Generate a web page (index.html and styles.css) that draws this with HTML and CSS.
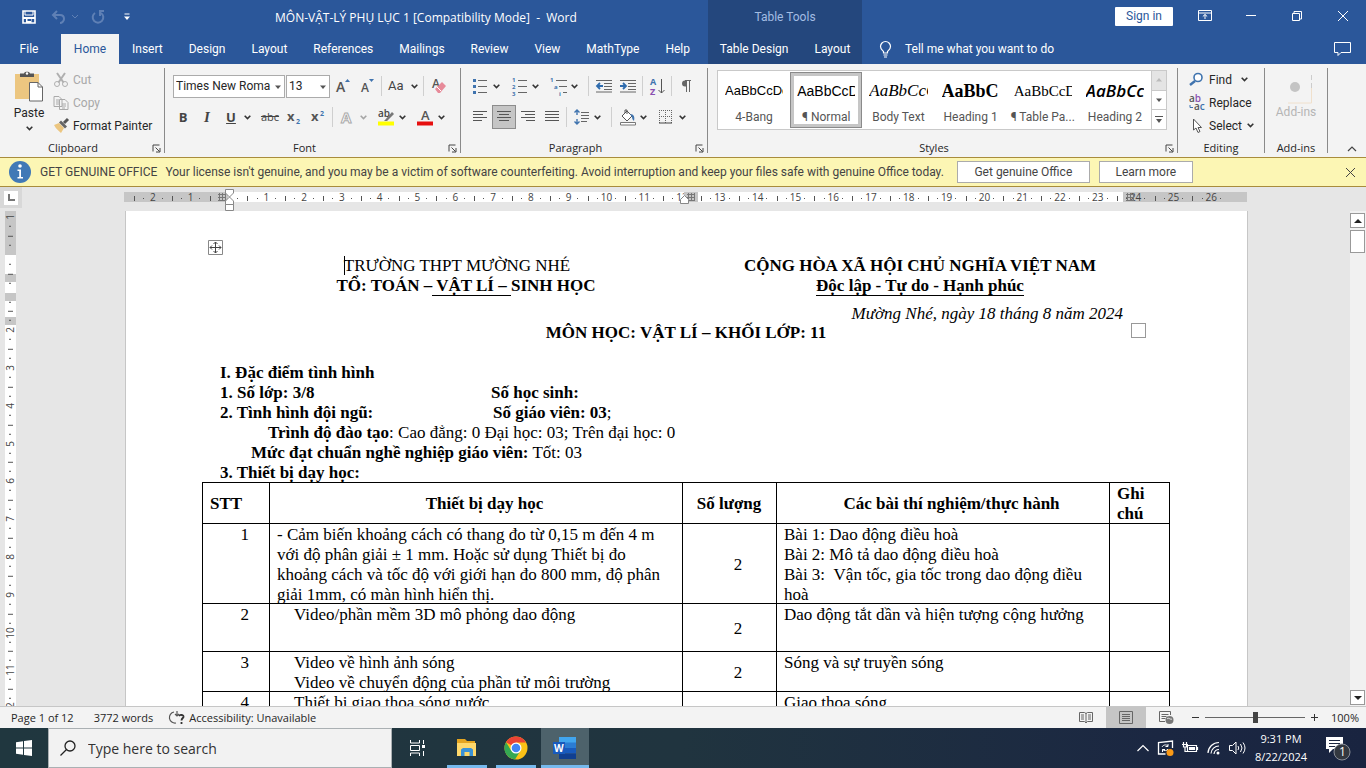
FILE: index.html
```html
<!DOCTYPE html>
<html lang="vi">
<head>
<meta charset="utf-8">
<title>MÔN-VẬT-LÝ PHỤ LỤC 1 - Word</title>
<link rel="stylesheet" href="styles.css">
</head>
<body>
<svg class="defs" aria-hidden="true">
  <symbol id="chev" viewBox="0 0 8 8"><path d="M1.500 2.500 4 5l2.500-2.500" fill="none" stroke="#333" stroke-width="1.400"/></symbol>
  <symbol id="tri" viewBox="0 0 8 8"><path d="M1 2.500h6L4 6z" fill="#555"/></symbol>
  <symbol id="launch" viewBox="0 0 9 9"><path d="M1 7.500V1h6.500M3.500 3.500l4 4M8 4v4H4" fill="none" stroke="#444"/></symbol>
</svg>

<header class="top">
  <div class="titlebar">
    <div class="quick">
      <button aria-label="Save"><svg width="14" height="14" viewBox="0 0 14 14"><path d="M1 1h12v12H1z" fill="none" stroke="#fff" stroke-width="1.600"/><path d="M1 7h12v2H1zM4 9h1.500v4H4zM5 11h5V9h-.5v4H5z" fill="#fff"/><path d="M3 1v4h8V1" fill="none" stroke="#fff"/></svg></button>
      <button class="undo" aria-label="Undo"><svg width="28" height="14" viewBox="0 0 28 14"><path d="M6 1 2 5l4 4M2 5h7c3 0 4 2 4 4s-2 4-4 4" fill="none" stroke="#5f80b5" stroke-width="2"/><path d="m21 5 3 3 3-3" fill="none" stroke="#5f80b5"/></svg></button>
      <button aria-label="Redo"><svg width="14" height="14" viewBox="0 0 14 14"><path d="M4 3a5.300 5.300 0 1 0 6 0M8 1h5M9 1v5" fill="none" stroke="#5f80b5" stroke-width="2"/></svg></button>
      <button class="custom" aria-label="Customize"><svg width="8" height="8" viewBox="0 0 8 8"><path d="M1.500 1h5" stroke="#fff"/><path d="M1 3.500h6L4 7z" fill="#fff"/></svg></button>
    </div>
    <h1 class="doc-title">MÔN-VẬT-LÝ PHỤ LỤC 1 [Compatibility Mode] &nbsp;- &nbsp;Word</h1>
  </div>
  <div class="context-title">Table Tools</div>
  <div class="window">
    <button class="signin">Sign in</button>
    <button class="wbtn" aria-label="Ribbon display options"><svg width="14" height="12" viewBox="0 0 14 12"><path d="M.5.5h13v10H.5zM.5 3h13M7 9V4.500M4.800 6.500 7 4.500l2.200 2" fill="none" stroke="#fff"/></svg></button>
    <button class="wbtn" aria-label="Minimize"><svg width="10" height="12" viewBox="0 0 10 12"><path d="M0 5.500h10" stroke="#fff"/></svg></button>
    <button class="wbtn" aria-label="Restore"><svg width="10" height="12" viewBox="0 0 10 12"><path d="M.5 3.500h7v7h-7zM2 3.500v-2h7.500V9H8" fill="none" stroke="#fff"/></svg></button>
    <button class="wbtn" aria-label="Close"><svg width="10" height="12" viewBox="0 0 10 12"><path d="m0 1 10 10M10 1 0 11" stroke="#fff" fill="none"/></svg></button>
  </div>
  <nav class="tabs">
    <button class="file">File</button><button class="active">Home</button><button>Insert</button><button>Design</button><button>Layout</button><button>References</button><button>Mailings</button><button>Review</button><button>View</button><button>MathType</button><button>Help</button>
  </nav>
  <nav class="tabs context"><button>Table Design</button><button>Layout</button></nav>
  <div class="tell">
    <svg width="13" height="17" viewBox="0 0 13 17"><path d="M4.500 12v-1.500C3 9 1.500 8 1.500 5.500a5 5 0 0 1 10 0C11.500 8 10 9 8.500 10.500V12zM4.500 14h4M5 16h3" fill="none" stroke="#fff" stroke-width="1.200"/></svg>
    <button class="tell-btn">Tell me what you want to do</button>
    <button class="comment" aria-label="Comments"><svg width="17" height="15" viewBox="0 0 17 15"><path d="M.5.5h16v10H7l-3 3v-3H.500z" fill="none" stroke="#fff"/></svg></button>
  </div>
</header>

<section class="ribbon">
  <div class="group g-clip">
    <div class="body">
      <button class="paste"><svg width="30" height="31" viewBox="0 0 30 31"><path d="M1 3h24v25H1z" fill="#ecc680"/><path d="M6 6V2.500h4C10 0 16 0 16 2.500h4V6z" fill="#555"/><circle cx="13" cy="2.500" r="1.200" fill="#fff"/><path d="M15.500 11.500H24l4.500 4.500v14h-13z" fill="#fff" stroke="#666"/><path d="M24 11.500V16h4.500" fill="none" stroke="#666"/></svg><span>Paste</span><svg width="9" height="9"><use href="#chev"/></svg></button>
      <div class="stack">
        <button class="off"><svg width="16" height="16" viewBox="0 0 16 16"><path d="M4 1l6.500 9.500M12 1 5.500 10.500" stroke="#b0b0b0" stroke-width="2"/><circle cx="4" cy="12" r="2.500" fill="none" stroke="#b0b0b0"/><circle cx="12" cy="12" r="2.500" fill="none" stroke="#b0b0b0"/></svg>Cut</button>
        <button class="off"><svg width="16" height="16" viewBox="0 0 16 16"><path d="M1 1.500h5l3 3v7H1zM6.500 4.500H12l3 3v7H6.500z" fill="#f3f3f3" stroke="#aaa"/><path d="M3 5h3M3 7h3M3 9h3M9 9h4M9 11h4M9 13h3" stroke="#aaa"/></svg>Copy</button>
        <button><svg width="16" height="16" viewBox="0 0 16 16"><path d="M1 7 6 5l5 5-3 5C6 13 3 11 1 7z" fill="#ecc680"/><path d="m6 4.500 2-2 6 6-2 2z" fill="#666"/><path d="m11 5 4-4" stroke="#555" stroke-width="3"/></svg>Format Painter</button>
      </div>
    </div>
    <div class="label">Clipboard<svg width="9" height="9"><use href="#launch"/></svg></div>
  </div>

  <div class="group g-font">
    <div class="body rows">
      <div class="row">
        <span class="combo name"><select aria-label="Font"><option>Times New Roma</option></select><svg width="8" height="8"><use href="#tri"/></svg></span>
        <span class="combo size"><select aria-label="Font size"><option>13</option></select><svg width="8" height="8"><use href="#tri"/></svg></span>
        <button class="ic" aria-label="Grow font"><svg width="16" height="16" viewBox="0 0 16 16"><text class="ga" x="1" y="14" font-size="14">A</text><path d="M10 4h5l-2.500-3z" fill="#3f73ae"/></svg></button>
        <button class="ic" aria-label="Shrink font"><svg width="16" height="16" viewBox="0 0 16 16"><text class="ga" x="2" y="14" font-size="12">A</text><path d="M10 1h5l-2.500 3z" fill="#3f73ae"/></svg></button>
        <i class="sep"></i>
        <button class="split aa">Aa<svg width="9" height="9"><use href="#chev"/></svg></button>
        <i class="sep wide"></i>
        <button class="ic" aria-label="Clear formatting"><svg width="16" height="16" viewBox="0 0 16 16"><text class="ga" x="1" y="10" font-size="12">A</text><path d="m4 11 7-7 4 4-6 7H7z" fill="#e78a99"/><path d="m6 9 4 4" stroke="#fff"/></svg></button>
      </div>
      <div class="row second">
        <button class="ic"><b>B</b></button><button class="ic"><em>I</em></button>
        <button class="split"><span class="ic"><u>U</u></span><svg width="9" height="9"><use href="#chev"/></svg></button>
        <button class="ic abc"><s>abc</s></button>
        <button class="ic" aria-label="Subscript"><svg width="16" height="16" viewBox="0 0 16 16"><text class="gx" x="1" y="12">x</text><text class="gn" x="10" y="15">2</text></svg></button>
        <button class="ic" aria-label="Superscript"><svg width="16" height="16" viewBox="0 0 16 16"><text class="gx" x="1" y="12">x</text><text class="gn" x="10" y="7">2</text></svg></button>
        <i class="sep"></i>
        <button class="split" aria-label="Text effects"><span class="ic"><svg width="16" height="16" viewBox="0 0 16 16"><text class="fx" x="2" y="14">A</text></svg></span><svg class="dim" width="9" height="9"><use href="#chev"/></svg></button>
        <button class="split" aria-label="Highlight"><span class="ic"><svg width="17" height="17" viewBox="0 0 17 17"><text class="hl" x="0" y="8">ab</text><path d="m7 11 7-8 2 2-7 7H6z" fill="#777"/><path d="M0 12.500h16v4H0z" fill="#ff0"/></svg></span><svg width="9" height="9"><use href="#chev"/></svg></button>
        <button class="split" aria-label="Font color"><span class="ic"><svg width="17" height="17" viewBox="0 0 17 17"><text class="ga" x="4" y="11" font-size="13">A</text><path d="M0 12.500h16v4H0z" fill="#e60f0f"/></svg></span><svg width="9" height="9"><use href="#chev"/></svg></button>
      </div>
    </div>
    <div class="label">Font<svg width="9" height="9"><use href="#launch"/></svg></div>
  </div>

  <div class="group g-para">
    <div class="body rows">
      <div class="row">
        <button class="split" aria-label="Bullets"><span class="ic"><svg width="15" height="16" viewBox="0 0 15 16"><path d="M5 2.500h9M5 8.500h9M5 14.500h9" stroke="#666"/><path d="M0 1h3v3H0zM0 7h3v3H0zM0 13h3v3H0z" fill="#3f73ae"/></svg></span><svg width="9" height="9"><use href="#chev"/></svg></button>
        <button class="split" aria-label="Numbering"><span class="ic"><svg width="15" height="17" viewBox="0 0 15 17"><path d="M6 2.500h9M6 8.500h9M6 14.500h9" stroke="#666"/><text class="li" x="0" y="4">1</text><text class="li" x="0" y="11">2</text><text class="li" x="0" y="18">3</text></svg></span><svg width="9" height="9"><use href="#chev"/></svg></button>
        <button class="split" aria-label="Multilevel list"><span class="ic"><svg width="17" height="17" viewBox="0 0 17 17"><path d="M6 2.500h11M9 8.500h8M13 14.500h4" stroke="#666"/><text class="li" x="0" y="4">1</text><text class="li" x="4" y="11">a</text><text class="li" x="9" y="18">i</text></svg></span><svg width="9" height="9"><use href="#chev"/></svg></button>
        <i class="sep wide"></i>
        <button class="ic" aria-label="Decrease indent"><svg width="16" height="14" viewBox="0 0 16 14"><path d="M0 1.500h16M8 4.500h8M8 7.500h8M8 10.500h8M0 13h16" stroke="#666"/><path d="M7 7H1m3-3L1 7l3 3" fill="none" stroke="#2f6cae" stroke-width="1.800"/></svg></button>
        <button class="ic" aria-label="Increase indent"><svg width="16" height="14" viewBox="0 0 16 14"><path d="M0 1.500h16M8 4.500h8M8 7.500h8M8 10.500h8M0 13h16" stroke="#666"/><path d="M0 7h6M3 4l3 3-3 3" fill="none" stroke="#2f6cae" stroke-width="1.800"/></svg></button>
        <i class="sep"></i>
        <button class="ic" aria-label="Sort"><svg width="15" height="17" viewBox="0 0 15 17"><text x="0" y="7" font-size="9" class="sa">A</text><text x="0" y="17" font-size="9" class="sz">Z</text><path d="M11.500 1v14M8.500 12l3 3 3-3" fill="none" stroke="#555"/></svg></button>
        <i class="sep"></i>
        <button class="ic" aria-label="Show marks"><svg width="12" height="14" viewBox="0 0 12 14"><path d="M11 1.500H5a3 3 0 0 0 0 6h1V2" fill="#666"/><path d="M6.500 1v12M9.500 1v12M5 1.500h6" stroke="#666"/></svg></button>
      </div>
      <div class="row second">
        <button class="ic" aria-label="Align left"><svg width="14" height="12" viewBox="0 0 14 12"><path d="M0 .5h14M0 3.500h10M0 6.500h14M0 9.500h9" stroke="#555"/></svg></button>
        <button class="ic on" aria-label="Center"><svg width="14" height="12" viewBox="0 0 14 12"><path d="M0 .5h14M2 3.500h10M0 6.500h14M2 9.500h10" stroke="#555"/></svg></button>
        <button class="ic" aria-label="Align right"><svg width="14" height="12" viewBox="0 0 14 12"><path d="M0 .5h14M4 3.500h10M0 6.500h14M5 9.500h9" stroke="#555"/></svg></button>
        <button class="ic" aria-label="Justify"><svg width="14" height="12" viewBox="0 0 14 12"><path d="M0 .5h14M0 3.500h14M0 6.500h14M0 9.500h14" stroke="#555"/></svg></button>
        <i class="sep"></i>
        <button class="split" aria-label="Line spacing"><span class="ic"><svg width="15" height="16" viewBox="0 0 15 16"><path d="M7 3.500h8M7 6.500h8M7 9.500h8M7 12.500h6" stroke="#666"/><path d="M3 1v5M3 10v5M.5 3.500 3 1l2.500 2.500M.5 12.500 3 15l2.500-2.500" fill="none" stroke="#3f73ae" stroke-width="1.400"/></svg></span><svg width="9" height="9"><use href="#chev"/></svg></button>
        <i class="sep wide"></i>
        <button class="split" aria-label="Shading"><span class="ic"><svg width="17" height="17" viewBox="0 0 17 17"><path d="m3 7 5-5 5 5-5 5zM6 4V1h2v4" fill="#fff" stroke="#555"/><path d="M11 5c4 0 5 3 4 7-1-1-2-2-2-4z" fill="#3f73ae"/><path d="M1.500 13.500h15v2.500h-15z" fill="#fff" stroke="#777"/></svg></span><svg width="9" height="9"><use href="#chev"/></svg></button>
        <button class="split" aria-label="Borders"><span class="ic"><svg width="14" height="14" viewBox="0 0 14 14"><path d="M.5 0v13M6.500 0v13M12.500 0v13M0 .5h13M0 6.500h13" stroke="#666" stroke-dasharray="1 1"/><path d="M0 13h13" stroke="#444"/></svg></span><svg width="9" height="9"><use href="#chev"/></svg></button>
      </div>
    </div>
    <div class="label">Paragraph<svg width="9" height="9"><use href="#launch"/></svg></div>
  </div>

  <div class="group g-styles">
    <div class="gallery">
      <button><span class="pv sans">AaBbCcDc</span><span>4-Bang</span></button>
      <button class="sel"><span class="pv sans big">AaBbCcD</span><span>¶ Normal</span></button>
      <button><span class="pv it">AaBbCcC</span><span>Body Text</span></button>
      <button><span class="pv bd">AaBbC</span><span>Heading 1</span></button>
      <button><span class="pv">AaBbCcD</span><span>¶ Table Pa...</span></button>
      <button><span class="pv h2">AaBbCc</span><span>Heading 2</span></button>
      <div class="gscroll">
        <button class="offbg" aria-label="Up"><svg width="8" height="8" viewBox="0 0 8 8"><path d="M1 5.500h6L4 2z" fill="#bbb"/></svg></button>
        <button aria-label="Down"><svg width="8" height="8"><use href="#tri"/></svg></button>
        <button aria-label="More"><svg width="8" height="8" viewBox="0 0 8 8"><path d="M0 .5h8" stroke="#555"/><path d="M1 3h6L4 7z" fill="#555"/></svg></button>
      </div>
    </div>
    <div class="label">Styles<svg width="9" height="9"><use href="#launch"/></svg></div>
  </div>

  <div class="group g-edit">
    <div class="stack">
      <button><svg width="16" height="16" viewBox="0 0 16 16"><circle cx="9" cy="5.500" r="4" fill="#fff" stroke="#3f73ae" stroke-width="1.600"/><path d="m6 9-5 4" stroke="#3f73ae" stroke-width="2.500"/></svg>Find<svg class="far" width="9" height="9"><use href="#chev"/></svg></button>
      <button><svg width="16" height="16" viewBox="0 0 16 16"><text class="rp" x="0" y="7">a<tspan fill="#8a4fb0">b</tspan></text><text class="rp" x="5" y="15">a<tspan fill="#3f73ae">c</tspan></text><path d="M1 10v2.500h3" fill="none" stroke="#3f73ae"/></svg>Replace</button>
      <button><svg width="16" height="16" viewBox="0 0 16 16"><path d="M4.500 1v11l2.500-2 2 4.500 2-1L9 9.500h3.500z" fill="#fff" stroke="#555"/></svg>Select<svg width="9" height="9"><use href="#chev"/></svg></button>
    </div>
    <div class="label">Editing</div>
  </div>

  <div class="group g-add">
    <button class="addins"><svg width="36" height="32" viewBox="0 0 36 32"><circle cx="17" cy="15" r="5" fill="#c4c4c4"/><path d="M33.500 3v13" stroke="#ccc" stroke-dasharray="5 3"/><path d="M33.500 16v15H10" fill="none" stroke="#f0e0cc"/></svg><span>Add-ins</span></button>
    <div class="label">Add-ins</div>
  </div>
  <button class="collapse" aria-label="Collapse ribbon"><svg width="10" height="6" viewBox="0 0 10 6"><path d="m1 5 4-4 4 4" fill="none" stroke="#444" stroke-width="1.200"/></svg></button>
</section>

<section class="notice">
  <svg width="22" height="22" viewBox="0 0 22 22"><circle cx="11" cy="11" r="11" fill="#4179b6"/><circle cx="11" cy="5" r="1.800" fill="#fff"/><path d="M8.500 8.500H12V16h2v1.500H8.500V16h1.700v-6H8.500z" fill="#fff"/></svg>
  <strong>GET GENUINE OFFICE</strong>
  <span class="msg">Your license isn't genuine, and you may be a victim of software counterfeiting. Avoid interruption and keep your files safe with genuine Office today.</span>
  <button class="get">Get genuine Office</button><button class="learn">Learn more</button>
  <button class="x" aria-label="Close message"><svg width="9" height="9" viewBox="0 0 9 9"><path d="m0 0 9 9M9 0 0 9" stroke="#444"/></svg></button>
</section>

<main class="work">
  <div class="corner"><button aria-label="Tab selector"><svg width="7" height="7" viewBox="0 0 7 7"><path d="M1 0v6h6" fill="none" stroke="#777" stroke-width="2"/></svg></button></div>
  <div class="hband">
    <div class="hruler">
      <span>2</span><span>1</span><span></span><span>1</span><span>2</span><span>3</span><span>4</span><span>5</span><span>6</span><span>7</span><span>8</span><span>9</span><span>10</span><span>11</span><span>12</span><span>13</span><span>14</span><span>15</span><span>16</span><span>17</span><span>18</span><span>19</span><span>20</span><span>21</span><span>22</span><span>23</span><span>24</span><span>25</span><span>26</span>
      <svg class="grip a" width="8" height="8" viewBox="0 0 8 8"><path d="M1.500 0v8M4.500 0v8M7.500 0v8M0 1.500h8M0 4.500h8M0 7.500h8" stroke="#777"/></svg>
      <svg class="grip b" width="14" height="10" viewBox="0 0 14 10"><path d="M0 0h14v10H0z" fill="#c6c6c6"/><path d="M4.500 1v8M7.500 1v8M10.500 1v8M3 2.500h8M3 5.500h8M3 8.500h8" stroke="#777"/></svg>
      <svg class="grip c" width="8" height="8" viewBox="0 0 8 8"><path d="M1.500 0v8M4.500 0v8M7.500 0v8M0 1.500h8M0 4.500h8M0 7.500h8" stroke="#777"/></svg>
      <svg class="mark m1" width="9" height="22" viewBox="0 0 9 22"><path d="M.5.5h8V4L4.500 8 .5 4zM.5 15.500V12l4-4 4 4v3.500zM.5 15.500h8v6h-8z" fill="#fff" stroke="#888"/></svg>
      <svg class="mark m2" width="9" height="9" viewBox="0 0 9 9"><path d="M.5 8.500V4.500l4-4 4 4v4z" fill="#fff" stroke="#888"/></svg>
    </div>
  </div>
  <div class="vruler"><div class="vcells"><span>1</span><span></span><span></span><span>2</span><span>3</span><span>4</span><span>5</span><span>6</span><span>7</span><span>8</span><span>9</span><span>10</span><span>11</span><span>12</span></div></div>
  <div class="canvas">
    <article class="page">
      <svg class="handle" width="15" height="15" viewBox="0 0 15 15"><path d="M.5.5h14v14H.5z" fill="#fff" stroke="#888"/><path d="M7.500 2v11M2 7.500h11M5.500 4l2-2 2 2M5.500 11l2 2 2-2M4 5.500l-2 2 2 2M11 5.500l2 2-2 2" fill="none" stroke="#444"/></svg>
      <div class="heads">
        <div class="left"><p class="caret">TRƯỜNG THPT MƯỜNG NHÉ</p><p class="unit"><b>TỔ: TOÁN –<span class="ul"> VẬT LÍ – </span>SINH HỌC</b></p></div>
        <div class="right"><p><b>CỘNG HÒA XÃ HỘI CHỦ NGHĨA VIỆT NAM</b></p><p><b class="ul">Độc lập - Tự do - Hạnh phúc</b></p><p class="date">Mường Nhé, ngày 18 tháng 8 năm 2024</p></div>
        <i class="endbox"></i>
      </div>
      <h2 class="subject">MÔN HỌC: VẬT LÍ – KHỐI LỚP: 11</h2>
      <div class="intro">
        <p><b>I. Đặc điểm tình hình</b></p>
        <p class="pair"><b>1. Số lớp: 3/8</b><b>Số học sinh:</b></p>
        <p class="pair two"><b>2. Tình hình đội ngũ:</b><span><b>Số giáo viên: 03</b>;</span></p>
        <p class="in2"><b>Trình độ đào tạo</b>: Cao đẳng: 0 Đại học: 03; Trên đại học: 0</p>
        <p class="in1"><b>Mức đạt chuẩn nghề nghiệp giáo viên:</b> Tốt: 03</p>
        <p><b>3. Thiết bị dạy học:</b></p>
      </div>
      <table class="grid">
        <colgroup><col class="c1"><col><col class="c3"><col class="c4"><col class="c5"></colgroup>
        <thead><tr><th class="l">STT</th><th class="wide-h">Thiết bị dạy học</th><th>Số lượng</th><th class="wide-h">Các bài thí nghiệm/thực hành</th><th class="l"><p>Ghi<br>chú</p></th></tr></thead>
        <tbody>
          <tr><td class="n"><p>1</p></td><td><p>- Cảm biến khoảng cách có thang đo từ 0,15 m đến 4 m<br>với độ phân giải ± 1 mm. Hoặc sử dụng Thiết bị đo<br>khoảng cách và tốc độ với giới hạn đo 800 mm, độ phân<br>giải 1mm, có màn hình hiển thị.</p></td><td class="q"><p>2</p></td><td><p>Bài 1: Dao động điều hoà<br>Bài 2: Mô tả dao động điều hoà<br>Bài 3: &nbsp;Vận tốc, gia tốc trong dao động điều<br>hoà</p></td><td></td></tr>
          <tr class="r2"><td class="n"><p>2</p></td><td class="ind"><p>Video/phần mềm 3D mô phỏng dao động</p></td><td class="q"><p>2</p></td><td><p>Dao động tắt dần và hiện tượng cộng hưởng</p></td><td></td></tr>
          <tr><td class="n"><p>3</p></td><td class="ind"><p>Video về hình ảnh sóng<br>Video về chuyển động của phần tử môi trường</p></td><td class="q"><p>2</p></td><td><p>Sóng và sự truyền sóng</p></td><td></td></tr>
          <tr><td class="n"><p>4</p></td><td class="ind"><p>Thiết bị giao thoa sóng nước</p></td><td></td><td><p>Giao thoa sóng</p></td><td></td></tr>
        </tbody>
      </table>
    </article>
  </div>
  <div class="vscroll">
    <button aria-label="Scroll up"><svg width="8" height="8" viewBox="0 0 8 8"><path d="M0 6h8L4 2z" fill="#222"/></svg></button>
    <i class="thumb"></i>
    <button class="down" aria-label="Scroll down"><svg width="8" height="8" viewBox="0 0 8 8"><path d="M0 2h8L4 6z" fill="#222"/></svg></button>
  </div>
</main>

<footer class="status">
  <span class="pg">Page 1 of 12</span><span class="wc">3772 words</span>
  <span class="acc"><svg width="16" height="15" viewBox="0 0 16 15"><path d="M4 2a5.500 5.500 0 0 0 2 11M7 1v5M5 4l2 2 2-2" fill="none" stroke="#555" stroke-width="1.200"/><path d="M9 6c1-2 5-1 4.500 1-.3 1-2 1.500-2 3.500m0 1.500v2" fill="none" stroke="#333" stroke-width="1.800"/></svg>Accessibility: Unavailable</span>
  <div class="views">
    <button aria-label="Read mode"><svg width="14" height="13" viewBox="0 0 14 13"><path d="M.5 1.500h5L7 2.500l1.500-1h5v9h-5L7 12l-1.500-1.500h-5zM7 2v10M2 4h3M2 6h3M2 8h3M9 4h3M9 6h3M9 8h3" fill="none" stroke="#666"/></svg></button>
    <button class="on" aria-label="Print layout"><svg width="14" height="13" viewBox="0 0 14 13"><path d="M.5.5h13v12H.5zM3 3.500h8M3 5.500h8M3 7.500h8M3 9.500h8" fill="none" stroke="#666"/></svg></button>
    <button aria-label="Web layout"><svg width="15" height="13" viewBox="0 0 15 13"><path d="M6 10.500H.5V.5h11V4M2.500 3.500h7M2.500 5.500h5M2.500 7.500h4" fill="none" stroke="#666"/><circle cx="10.500" cy="9" r="4" fill="#777"/><path d="M8 8c2-2 3 1 5 0" stroke="#eee" fill="none"/></svg></button>
  </div>
  <button class="pm" aria-label="Zoom out"><svg width="9" height="9" viewBox="0 0 9 9"><path d="M1 4.500h7" stroke="#333"/></svg></button>
  <input class="zoom" type="range" min="0" max="100" value="50" aria-label="Zoom">
  <button class="pm" aria-label="Zoom in"><svg width="9" height="9" viewBox="0 0 9 9"><path d="M1 4.500h7M4.500 1v7" stroke="#333"/></svg></button>
  <span class="pct">100%</span>
</footer>

<footer class="taskbar">
  <button class="start" aria-label="Start"><svg width="16" height="16" viewBox="0 0 16 16"><path d="M0 2.200 7 1.200V7.500H0zM8 1 16 0v7.500H8zM0 8.500h7v6.300L0 13.800zM8 8.500h8V16L8 15z" fill="#fff"/></svg></button>
  <label class="search"><svg width="17" height="17" viewBox="0 0 17 17"><circle cx="10" cy="6" r="5" fill="none" stroke="#222" stroke-width="1.300"/><path d="M6.500 9.500.5 15.500" stroke="#222" stroke-width="1.300"/></svg><input type="text" placeholder="Type here to search" aria-label="Search"></label>
  <button class="app tv" aria-label="Task view"><svg width="16" height="16" viewBox="0 0 16 16"><path d="M1.500 0v3h9V0M1.500 5.500h9v5h-9zM1.500 16v-3h9v3M14.500 0v4M14.500 11v5" fill="none" stroke="#fff"/><path d="M13 5h3v3h-3z" fill="#fff"/></svg></button>
  <button class="app open ex" aria-label="File Explorer"><svg width="20" height="20" viewBox="0 0 20 20"><path d="M0 1h8l2 2h8v15H0z" fill="#e5a520"/><path d="M0 5h19v13H0z" fill="#ffd86b"/><path d="M4 18v-6.500L6 10h8l2 1.500V18h-3.500v-4h-5v4z" fill="#3b92d6"/></svg></button>
  <button class="app open ch" aria-label="Chrome"><svg width="24" height="24" viewBox="0 0 24 24"><circle cx="12" cy="12" r="11.500" fill="#fbc116"/><path d="M12 12 2 6.200A11.500 11.500 0 0 1 22 6.500H12z" fill="#ea4335"/><path d="M2 6.200A11.500 11.500 0 0 0 11 23.500L16.500 14.500 7.200 14.500z" fill="#34a853"/><circle cx="12" cy="12" r="5.500" fill="#fff"/><circle cx="12" cy="12" r="4.300" fill="#4285f4"/></svg></button>
  <button class="app open wd" aria-label="Word"><svg width="24" height="22" viewBox="0 0 24 22"><path d="M6 0h17v6H6z" fill="#41a5ee"/><path d="M6 5.500h17V11H6z" fill="#2b7cd3"/><path d="M6 11h17v5.500H6z" fill="#185abd"/><path d="M6 16.500h17V22H6z" fill="#103f91"/><path d="M0 5h12v12H0z" fill="#185abd"/><text x="1" y="15" class="wl">W</text></svg></button>
  <div class="tray">
    <svg width="12" height="12" viewBox="0 0 12 12"><path d="m.5 9 5.500-5.500L11.500 9" fill="none" stroke="#fff" stroke-width="1.200"/></svg>
    <svg width="17" height="16" viewBox="0 0 17 16"><path d="M15.500 8V1L1.500 2.500V14h7" fill="none" stroke="#fff" stroke-width="1.300"/><path d="M5 7c1-2 4-3 6-1m0-2v2.500H8.500M11 9c-1 2-4 2-5.500.500M5.500 12V9.500H8" fill="none" stroke="#fff"/><circle cx="13" cy="12.500" r="3.500" fill="#fb9a17"/></svg>
    <svg width="17" height="12" viewBox="0 0 17 12"><path d="M5.500 3.500h9v6h-9zM15.500 5v3M0 2.500h6M1.500 0v5h3V0M3 5v4.500h2" fill="none" stroke="#fff" stroke-width="1.200"/><path d="M7 5h6v3H7z" fill="#fff"/></svg>
    <svg width="14" height="14" viewBox="0 0 14 14"><path d="M1 12A11 11 0 0 1 12 1.500M4 12.500A8 8 0 0 1 12 5M7 13a5 5 0 0 1 5-4.500" fill="none" stroke="#fff" stroke-width="1.200"/><circle cx="11" cy="12" r="1.500" fill="#fff"/></svg>
    <svg width="17" height="14" viewBox="0 0 17 14"><path d="M.5 4.500h3l3.500-3.500v12L3.500 9.500h-3zM9 5q1.500 2 0 4M11.500 3q3 4 0 8M14 1.500q4 5.500 0 11" fill="none" stroke="#fff"/></svg>
  </div>
  <div class="clock"><span>9:31 PM</span><span>8/22/2024</span></div>
  <button class="bell" aria-label="Notifications"><svg width="26" height="26" viewBox="0 0 26 26"><path d="M1 2h17v12H8l-4 4v-4H1z" fill="#fff"/><path d="M4 5.500h11M4 8.500h11M4 11.500h6" stroke="#1c2740"/><circle cx="17" cy="17" r="8" fill="#333840" stroke="#8a8f98"/><text x="14" y="21" class="bn">1</text></svg></button>
</footer>
</body>
</html>
```
FILE: styles.css
```css
* { box-sizing: border-box; }
body { margin: 0; height: 100vh; display: flex; flex-direction: column; overflow: hidden; font: 12px/16px Roboto, "Open Sans", sans-serif; color: #262626; background: #e6e6e6; }
button { font: inherit; color: inherit; background: none; border: 0; padding: 0; margin: 0; display: inline-flex; align-items: center; justify-content: center; white-space: nowrap; flex: none; }
svg { display: block; flex: none; overflow: visible; }
p, h1, h2 { margin: 0; font-weight: normal; }
.defs { position: absolute; width: 0; height: 0; }

/* title bar and tabs */
.top { display: grid; grid-template-columns: 708px 154px 1fr; grid-template-rows: 34px 30px; background: #2b579a; color: #fff; flex: none; }
.titlebar { display: flex; align-items: center; }
.quick { display: flex; align-items: center; padding-left: 22px; width: 275px; }
.undo { margin-left: 15px; }
.quick .undo + button { margin-left: 12px; }
.quick .custom { margin-left: 18px; }
.doc-title { font: 12px/16px "Open Sans", sans-serif; white-space: nowrap; padding-top: 1px; }
.context-title { background: #24477d; color: #a3bde3; display: flex; align-items: center; justify-content: center; }
.window { display: flex; align-items: center; justify-content: flex-end; padding-bottom: 2px; }
.signin { background: #fff; color: #2b579a; width: 58px; height: 19px; margin-right: 9px; border-radius: 1px; }
.wbtn { width: 46px; height: 30px; }
.tabs { display: flex; }
.tabs button { padding: 0 13px; height: 30px; }
.tabs .file { width: 58px; margin-right: 3px; }
.tabs .active { background: #f3f3f3; color: #2b579a; width: 58px; padding: 0; }
.tabs.context { background: #24477d; justify-content: center; }
.tell { display: flex; align-items: center; padding: 0 15px 0 17px; }
.tell-btn { margin-left: 13px; }
.comment { margin-left: auto; }

/* ribbon */
.ribbon { display: flex; height: 93px; background: #f3f3f3; flex: none; padding-top: 4px; }
.group { position: relative; height: 85px; flex: none; border-right: 1px solid #8a8a8a; display: flex; flex-direction: column; }
.label { margin-top: auto; text-align: center; height: 10px; line-height: 10px; font-size: 11px; font-family: "Open Sans", sans-serif; position: relative; }
.label svg { position: absolute; right: 3px; top: 1px; }
.body { display: flex; }
.g-clip { width: 165px; }
.g-clip .label { padding-right: 18px; }
.g-font { width: 296px; padding-left: 6px; }
.g-font .label { padding-right: 22px; }
.g-para { width: 247px; padding-left: 7px; }
.g-para .label { padding-right: 24px; }
.group.g-styles { flex: 1 1 0; min-width: 0; padding: 2px 10px 0 9px; }
.g-styles .label { padding-right: 16px; }
.g-styles .label svg { right: -7px; }
.g-edit { width: 87px; padding-left: 11px; }
.g-edit .label { padding-right: 11px; }
.g-add { width: 63px; }
.paste { flex-direction: column; justify-content: flex-start; width: 50px; padding: 3px 0 0 8px; gap: 3px; }
.stack { display: flex; flex-direction: column; align-items: flex-start; }
.g-clip .stack { padding-left: 3px; }
.stack button { height: 23px; gap: 4px; }
.stack .far { margin-left: 4px; }
.off { color: #a8a8a8; }
.rows { flex-direction: column; }
.row { display: flex; align-items: center; height: 24px; margin-top: 6px; color: #444; }
.row.second { margin-top: 7px; }
.ic { width: 24px; height: 24px; display: inline-flex; align-items: center; justify-content: center; font-family: "Open Sans", sans-serif; }
.ic b, .ic em, .ic u { font-size: 13px; font-weight: 700; }
.ic em { font-family: "Liberation Serif", serif; font-size: 15px; }
.abc { font-size: 11px; }
.split { width: 36px; height: 24px; justify-content: flex-start; margin-right: 3px; }
.dim { opacity: .4; }
.aa { font-size: 13px; gap: 6px; padding-left: 4px; margin: 0; }
.on { background: #c5c5c5; box-shadow: inset 0 0 0 1px #8c8c8c; }
.sep { width: 1px; height: 20px; background: #cfcfcf; margin: 0 2px 0 2px; flex: none; }
.sep.wide { margin: 0 3px 0 3px; }
.combo { position: relative; height: 23px; flex: none; }
.combo select { appearance: none; width: 100%; height: 23px; border: 1px solid #ababab; border-radius: 0; background: #fff; font: inherit; color: #262626; padding: 0 0 0 2px; }
.combo svg { position: absolute; right: 3px; top: 8px; }
.name { width: 112px; margin: 0 1px 0 2px; }
.g-font .row .size { width: 44px; margin-right: 1px; }
.ga { font-family: "Open Sans", sans-serif; font-weight: 600; fill: #555; }
.gx { font: 700 13px "Open Sans", sans-serif; fill: #555; }
.gn { font: 700 7px "Open Sans", sans-serif; fill: #3f73ae; }
.fx { font: 700 15px "Open Sans", sans-serif; fill: #fff; stroke: #aaa; }
.hl { font: 600 10px "Open Sans", sans-serif; fill: #444; }
.li { font: 700 6px "Open Sans", sans-serif; fill: #3f73ae; }
.sa { font-family: "Open Sans", sans-serif; font-weight: 700; fill: #3f73ae; }
.sz { font-family: "Open Sans", sans-serif; font-weight: 700; fill: #8a4fb0; }
.rp { font: 600 10px "Open Sans", sans-serif; fill: #555; }
.gallery { display: flex; height: 60px; background: #fff; border: 1px solid #c9c9c9; }
.gallery > button { flex: 1; min-width: 0; flex-direction: column; color: #555; padding: 5px 7px 0; gap: 3px; justify-content: flex-start; overflow: hidden; }
.gallery > .sel { box-shadow: inset 0 0 0 1px #8a8a8a, inset 0 0 0 4px #c6c6c6; margin: 1px 0; padding-top: 4px; }
.pv { width: 100%; height: 30px; line-height: 30px; overflow: hidden; color: #000; font-family: "Liberation Serif", serif; font-size: 15px; text-align: left; }
.pv.sans { font-family: "Liberation Sans", sans-serif; font-size: 13px; }
.pv.big { font-size: 14px; }
.pv.it { font-style: italic; font-size: 17px; }
.pv.bd { font-weight: 700; font-size: 18px; }
.pv.h2 { font: italic 600 17px/30px "Open Sans", sans-serif; }
.gscroll { width: 15px; display: flex; flex-direction: column; border-left: 1px solid #c9c9c9; flex: none; }
.gscroll button { flex: 1; border-bottom: 1px solid #c9c9c9; }
.gscroll button:last-child { border-bottom: 0; }
.offbg { background: #e4e4e4; }
.addins { flex-direction: column; color: #b5b5b5; padding-top: 4px; }
.collapse { width: 38px; align-self: flex-end; justify-content: flex-end; padding: 0 9px 5px 0; }

/* license notice */
.notice { display: flex; align-items: center; height: 30px; flex: none; background: #fcf6b4; border: solid #a88c3c; border-width: 1px 0; padding: 0 11px 0 9px; white-space: nowrap; color: #444; }
.notice strong { font-weight: 400; margin: 0 8px 0 9px; }
.notice button { height: 22px; background: #fff; border: 1px solid #ababab; }
.notice .get { margin-left: 13px; width: 133px; }
.notice .learn { margin-left: 9px; width: 94px; }
.notice .x { margin-left: auto; background: none; border: 0; }

/* document workspace */
.work { flex: 1; min-height: 0; display: grid; grid-template-columns: 22px 1fr 16px; grid-template-rows: 24px 1fr; background: #e6e6e6; }
.corner { background: #d8d8d8; display: flex; align-items: center; padding: 0 0 0 4px; height: 21px; }
.corner button { width: 14px; height: 14px; background: #fff; }
.hband { grid-column: 2 / 4; padding: 5px 119px 0 102px; }
.hruler { position: relative; display: flex; height: 10px; padding: 0 17px 0 10px; background: linear-gradient(90deg, #c6c6c6 104px, #fff 104px, #fff calc(100% - 124px), #c6c6c6 calc(100% - 124px)); font: 10px/11px "Open Sans", sans-serif; color: #444; }
.hruler span { flex: 1; text-align: center; background: linear-gradient(#555, #555) 0 4px / 1px 5px no-repeat, linear-gradient(#555, #555) 25% 6px / 1px 1px no-repeat, linear-gradient(#555, #555) 75% 6px / 1px 1px no-repeat; }
.grip { position: absolute; top: 1px; }
.grip.a { left: 94px; }
.grip.b { left: 560px; top: 0; }
.grip.c { right: 113px; }
.mark { position: absolute; }
.m1 { left: 101px; top: -3px; }
.m2 { left: 556px; top: 3px; }
.vruler { width: 11px; margin-left: 5px; overflow: hidden; background: linear-gradient(#c6c6c6 44px, #fff 44px, #fff 63px, #c6c6c6 63px, #c6c6c6 71px, #fff 71px, #fff 82px, #c6c6c6 82px, #c6c6c6 90px, #fff 90px, #fff 106px, #c6c6c6 106px, #c6c6c6 114px, #fff 114px); }
.vcells { display: flex; flex-direction: column; height: 529px; margin-top: -13px; font: 10px/11px "Open Sans", sans-serif; color: #444; }
.vcells span { flex: 1; display: flex; justify-content: center; writing-mode: vertical-rl; transform: rotate(180deg); text-align: center; background: linear-gradient(#555, #555) 3px 100% / 5px 1px no-repeat, linear-gradient(#555, #555) 5px 25% / 2px 1px no-repeat, linear-gradient(#555, #555) 5px 75% / 2px 1px no-repeat; }
.canvas { overflow: hidden; padding: 0 102px 0 103px; }
.page { position: relative; background: #fff; border: solid #c6c6c6; border-width: 0 1px; min-height: 100%; padding: 45px 77px 0 76px; font: 17px/20px "Liberation Serif", serif; color: #000; }
.handle { position: absolute; left: 82px; top: 29px; }
.heads { position: relative; display: grid; grid-template-columns: 1fr 1fr; height: 67px; text-align: center; white-space: nowrap; }
.heads .left { padding-left: 26px; }
.unit { padding-left: 18px; }
.right { padding-right: 16px; }
.ul { border-bottom: 1px solid #000; white-space: pre; }
.heads .date { font-style: italic; text-align: right; padding: 8px 31px 0 0; }
.caret::before { content: ""; display: inline-block; height: 19px; width: 1px; margin-right: -1px; background: #000; vertical-align: -4px; }
.endbox { position: absolute; right: 24px; bottom: -15px; width: 15px; height: 15px; border: 1px solid #999; background: #fff; }
.subject { font-size: 17px; font-weight: 700; text-align: center; margin-bottom: 20px; }
.intro { padding-left: 18px; white-space: nowrap; height: 119px; }
.pair { display: grid; grid-template-columns: 271px 1fr; }
.pair.two { grid-template-columns: 273px 1fr; }
.in2 { padding-left: 48px; }
.in1 { padding-left: 31px; }
.grid { width: 100%; table-layout: fixed; border-spacing: 0; border-right: 1px solid #000; white-space: nowrap; }
.c1 { width: 67px; }
.c3 { width: 94px; }
.c4 { width: 333px; }
.c5 { width: 60px; }
.grid th, .grid td { padding: 2px 8px 0; box-shadow: inset 1px 1px 0 #000; vertical-align: top; height: 40px; }
.grid td p { margin-bottom: -2px; }
.grid th p { font-weight: 700; margin-bottom: -1px; }
.grid th { vertical-align: middle; height: 41px; }
.grid .wide-h { padding-left: 26px; }
.grid .l { text-align: left; }
.grid .n { text-align: right; padding-right: 20px; }
.grid .ind { padding-left: 25px; }
.grid .q { vertical-align: middle; text-align: center; padding-left: 26px; }
.r2 td { height: 48px; }
.vscroll { background: #f1f1f1; display: flex; flex-direction: column; padding: 2px 1px 1px 0; }
.vscroll button { width: 15px; height: 15px; border: 1px solid #999; background: #fff; }
.thumb { height: 23px; width: 15px; margin-top: 2px; border: 1px solid #999; background: #fff; }
.vscroll .down { margin-top: auto; }

/* status bar */
.status { display: flex; align-items: center; height: 22px; flex: none; background: #f3f3f3; border-top: 1px solid #c6c6c6; padding: 0 7px 0 11px; font-size: 11px; font-family: "Open Sans", sans-serif; white-space: nowrap; }
.wc { margin-left: 20px; }
.acc { display: flex; align-items: center; margin-left: 17px; gap: 3px; }
.views { display: flex; margin-left: auto; }
.views button { width: 40px; height: 21px; }
.views .on { box-shadow: none; }
.pm { width: 19px; height: 20px; }
.zoom { appearance: none; width: 100px; height: 12px; margin: 0; background: linear-gradient(#666, #666) 0 50% / 100% 1px no-repeat; }
.zoom::-webkit-slider-thumb { appearance: none; width: 5px; height: 11px; background: #444; }
.pct { margin-left: 7px; }

/* taskbar */
.taskbar { display: flex; height: 40px; flex: none; background: linear-gradient(90deg, #20373f, #20343f 50%, #1b2742 85%, #192440); color: #fff; font-family: "Open Sans", sans-serif; }
.start { width: 48px; }
.search { display: flex; align-items: center; width: 344px; background: #f2f2f2; border: 1px solid #aab0b3; padding-left: 11px; gap: 11px; }
.search input { flex: 1; min-width: 0; border: 0; padding: 1px 0 0; background: none; outline: 0; font: 14px/20px "Open Sans", sans-serif; }
.search input::placeholder { color: #333; opacity: 1; }
.app { width: 49px; }
.app.open { width: 40px; border-bottom: 3px solid #76b9ed; margin-left: 6px; padding-top: 3px; }
.app.ch { margin-left: 9px; }
.app.wd { width: 48px; margin-left: 5px; background: #4d626b; }
.wl { font: 700 10px "Open Sans", sans-serif; fill: #fff; }
.tray { margin-left: auto; display: flex; align-items: center; gap: 8px; }
.clock { display: flex; flex-direction: column; align-items: center; justify-content: center; line-height: 18px; width: 70px; font-size: 11px; }
.bell { width: 50px; padding-right: 6px; }
.bn { font: 12px "Open Sans", sans-serif; fill: #fff; }
```
